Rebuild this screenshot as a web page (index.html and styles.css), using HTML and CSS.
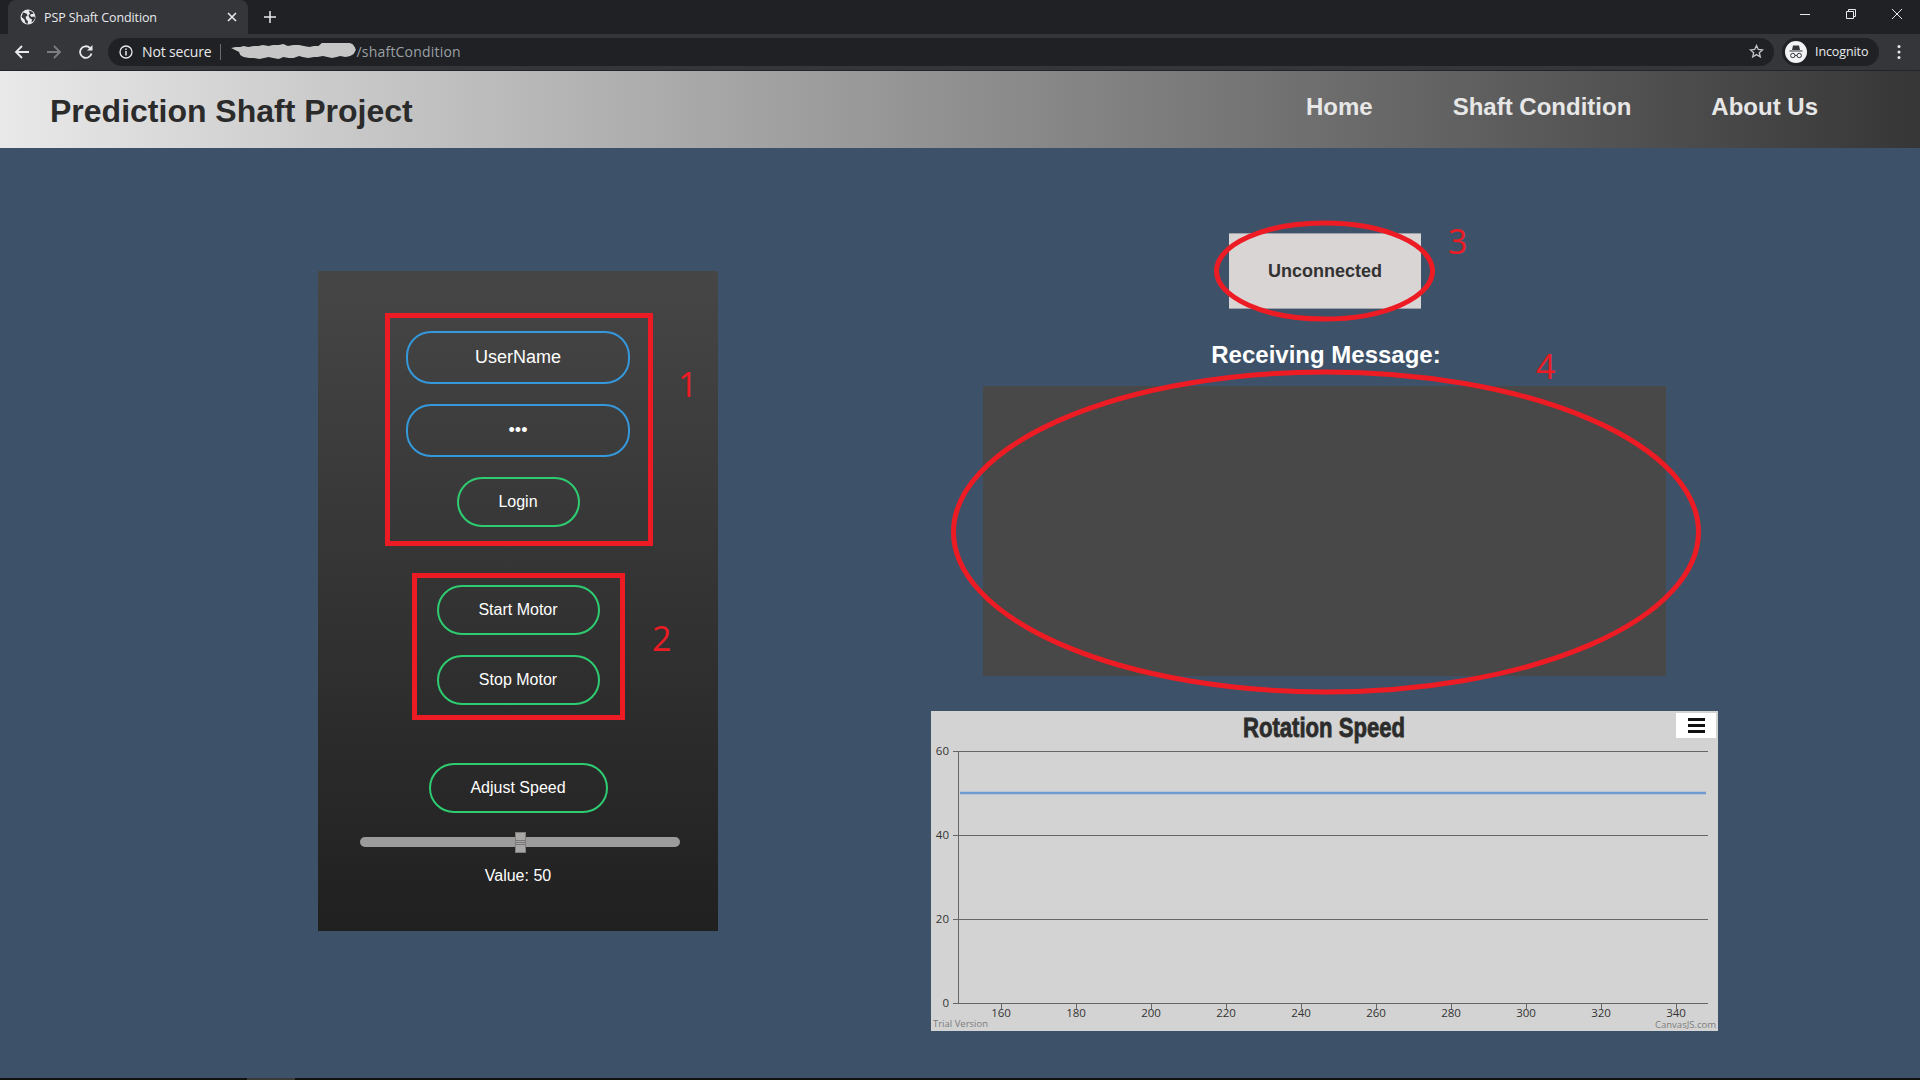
FILE: index.html
```html
<!DOCTYPE html>
<html lang="en">
<head>
<meta charset="utf-8">
<title>PSP Shaft Condition</title>
<link rel="stylesheet" href="styles.css">
</head>
<body>
<div class="tabstrip">
  <div class="tab">
    <svg class="favicon" width="16" height="16" viewBox="0 0 16 16"><circle cx="8" cy="8" r="7.500" fill="#e8eaed"/><path d="M3 3.500l3.500 1 1 2-2 1.500 1 3 1.500 1-.5 3-2-1-1-3.500-3-2.500zM9.500 1.500l3 1.500 1 2-2.500 0-1 1.500 1.500 1.500 3-.5.500 2-2 3-1.500 1 .5-3-2.500-1.500-1-2.500 1.500-2-1-2z" fill="#35363a"/></svg>
    <span class="tab-title">PSP Shaft Condition</span>
    <svg class="tab-close" width="10" height="10" viewBox="0 0 10 10"><path d="M1 1l8 8M9 1l-8 8" stroke="#e8eaed" stroke-width="1.600"/></svg>
  </div>
  <svg class="newtab" width="12" height="12" viewBox="0 0 12 12"><path d="M6 0v12M0 6h12" stroke="#e8eaed" stroke-width="1.500"/></svg>
  <div class="winctl">
    <svg width="12" height="12" viewBox="0 0 12 12"><path d="M1 6.500h10" stroke="#e8eaed"/></svg>
    <svg width="12" height="12" viewBox="0 0 12 12"><path d="M1.500 3.500h7v7h-7zM3.500 3.500v-2h7v7h-2" fill="none" stroke="#e8eaed"/></svg>
    <svg width="12" height="12" viewBox="0 0 12 12"><path d="M1 1l10 10M11 1l-10 10" stroke="#e8eaed"/></svg>
  </div>
</div>
<div class="toolbar">
  <svg class="navicon" width="16" height="16" viewBox="0 0 16 16"><path d="M15 8H2M8 2L2 8l6 6" fill="none" stroke="#e8eaed" stroke-width="1.800"/></svg>
  <svg class="navicon" width="16" height="16" viewBox="0 0 16 16"><path d="M1 8h13M8 2l6 6-6 6" fill="none" stroke="#7c7e82" stroke-width="1.800"/></svg>
  <svg class="navicon" width="16" height="16" viewBox="0 0 16 16"><path d="M13.500 9.500A5.800 5.800 0 1 1 12 4" fill="none" stroke="#e8eaed" stroke-width="1.800"/><path d="M14.500 1v5.500H9z" fill="#e8eaed"/></svg>
  <div class="omnibox">
    <svg width="14" height="14" viewBox="0 0 14 14"><circle cx="7" cy="7" r="6" fill="none" stroke="#e8eaed" stroke-width="1.300"/><path d="M7 6v4.500M7 3.500v1.500" stroke="#e8eaed" stroke-width="1.500"/></svg>
    <span class="secure">Not secure</span>
    <span class="omni-sep"></span>
    <svg class="blob" width="127" height="18" viewBox="0 0 112 18" preserveAspectRatio="none"><path d="M1 5l4-1 4 0 3-1 4 1 5-1 4 0 4-1 5 1 4-1 5 0 4-1 4 2 5-1 5 0 4 1 5 1 4-1 4 0 3-3 6-1 5 0 5-1 6 1 5 2 2 3 1 3-2 4-3 2-4 1-5-1-3 1-4 1-4-1-4-1-5 1-3 0-5 1-5-1-3-1-5 2-4 0-5-1-4 2-5-1-4-1-4 1-4 1-5-1-4 0-5-1-3-2-1-3z" fill="#c6c6c6"/></svg>
    <span class="url">/shaftCondition</span>
    <svg class="star" width="15" height="15" viewBox="0 0 15 15"><path d="M7.500 1.500l1.800 4 4.200.4-3.200 2.800 1 4.200-3.800-2.300-3.800 2.300 1-4.200L1.500 5.900l4.200-.4z" fill="none" stroke="#c4c6c9" stroke-width="1.300"/></svg>
  </div>
  <div class="incognito">
    <svg width="22" height="22" viewBox="0 0 22 22"><circle cx="11" cy="11" r="11" fill="#f1f3f4"/><path d="M7 9l1-4.500h6L15 9zM4.500 9.500h13v1h-13z" fill="#35363a"/><circle cx="7.800" cy="14.500" r="2.200" fill="none" stroke="#35363a"/><circle cx="14.200" cy="14.500" r="2.200" fill="none" stroke="#35363a"/><path d="M10 14.500h2" stroke="#35363a"/></svg>
    <span>Incognito</span>
  </div>
  <svg class="kebab" width="4" height="16" viewBox="0 0 4 16"><circle cx="2" cy="2.500" r="1.500" fill="#e8eaed"/><circle cx="2" cy="8" r="1.500" fill="#e8eaed"/><circle cx="2" cy="13.500" r="1.500" fill="#e8eaed"/></svg>
</div>
<header class="site-header">
  <h1 class="brand">Prediction Shaft Project</h1>
  <nav class="site-nav">
    <a>Home</a>
    <a>Shaft Condition</a>
    <a>About Us</a>
  </nav>
</header>
<main class="page">
  <section class="panel">
    <div class="mark-box login-box">
      <div class="pill field">UserName</div>
      <div class="pill field">•••</div>
      <div class="pill action login">Login</div>
    </div>
    <div class="mark-box motor-box">
      <div class="pill action motor">Start Motor</div>
      <div class="pill action motor">Stop Motor</div>
    </div>
    <div class="pill action adjust">Adjust Speed</div>
    <div class="slider"><span class="thumb"></span></div>
    <div class="value">Value: 50</div>
  </section>
  <section class="status">
    <div class="conn">Unconnected</div>
    <h2 class="recv">Receiving Message:</h2>
    <div class="msgbox"></div>
    <div class="chart">
      <svg class="chart-svg" width="787" height="320" viewBox="0 0 787 320">
        <text class="c-title" x="312" y="26" textLength="162" lengthAdjust="spacingAndGlyphs">Rotation Speed</text>
        <g class="c-grid">
          <path d="M22 40.500H777M22 124.500H777M22 208.500H777M22 292.500H777M27.500 40V293"/>
          <path d="M70.500 292V298M145.500 292V298M220.500 292V298M295.500 292V298M370.500 292V298M445.500 292V298M520.500 292V298M595.500 292V298M670.500 292V298M745.500 292V298"/>
        </g>
        <path class="c-line" d="M29 82H775"/>
        <g class="c-ylab">
          <text x="18" y="44">60</text><text x="18" y="128">40</text><text x="18" y="212">20</text><text x="18" y="296">0</text>
        </g>
        <g class="c-xlab">
          <text x="70" y="306">160</text><text x="145" y="306">180</text><text x="220" y="306">200</text><text x="295" y="306">220</text><text x="370" y="306">240</text><text x="445" y="306">260</text><text x="520" y="306">280</text><text x="595" y="306">300</text><text x="670" y="306">320</text><text x="745" y="306">340</text>
        </g>
        <text class="c-credit" x="2" y="316">Trial Version</text>
        <text class="c-credit c-right" x="785" y="317">CanvasJS.com</text>
      </svg>
      <div class="chart-menu"><span></span><span></span><span></span></div>
    </div>
  </section>
  <svg class="ink" width="1920" height="930" viewBox="0 0 1920 930">
    <ellipse cx="1324.500" cy="123" rx="108" ry="48"/>
    <ellipse cx="1326" cy="384" rx="372.500" ry="160"/>
  </svg>
  <span class="num num1">1</span>
  <span class="num num2">2</span>
  <span class="num num3">3</span>
  <span class="num num4">4</span>
</main>
<div class="taskbar"><span class="task-item"></span></div>
</body>
</html>
```
FILE: styles.css
```css
* { box-sizing: border-box; }
html, body { margin: 0; height: 1080px; overflow: hidden; }
body { display: flex; flex-direction: column; font-family: "Liberation Sans", Arial, sans-serif; background: #3d5269; }

.tabstrip { height: 34px; flex: none; display: flex; align-items: flex-end; padding-left: 8px; background: #202124; font-family: "Open Sans", sans-serif; position: relative; }
.tab { width: 240px; height: 34px; padding: 0 12px; display: flex; align-items: center; background: #35363a; border-radius: 8px 8px 0 0; color: #e8eaed; }
.favicon { flex: none; }
.tab-title { margin-left: 8px; font-size: 12.500px; letter-spacing: -.12px; white-space: nowrap; }
.tab-close { margin-left: auto; margin-right: -1px; }
.newtab { align-self: center; margin-left: 16px; }
.winctl { margin-left: auto; align-self: flex-start; display: flex; gap: 34px; padding: 8px 17px 0 0; }

.toolbar { height: 37px; flex: none; display: flex; align-items: center; background: #35363a; border-bottom: 1px solid #232427; padding: 0 0 1px 14px; color: #e8eaed; font-family: "Open Sans", sans-serif; }
.navicon { flex: none; margin-right: 16px; }
.omnibox { width: 1666px; margin-left: -2px; height: 28px; border-radius: 14px; background: #202124; display: flex; align-items: center; padding: 0 10px 0 11px; font-size: 14px; }
.secure { margin-left: 9px; letter-spacing: -.15px; white-space: nowrap; }
.omni-sep { width: 1px; height: 16px; background: #6a6b6e; margin: 0 9px 0 8px; }
.blob { flex: none; }
.url { color: #9aa0a6; letter-spacing: .2px; }
.star { margin-left: auto; }
.incognito { width: 97px; height: 28px; margin-left: 8px; border-radius: 14px; background: #202124; display: flex; align-items: center; gap: 8px; padding-left: 3px; font-size: 12.500px; white-space: nowrap; letter-spacing: -.1px; }
.kebab { margin-left: 18px; }

.site-header { height: 77px; flex: none; display: flex; justify-content: space-between; background: linear-gradient(90deg, #e9e9e9 0%, #363636 100%); padding: 0 102px 0 50px; }
.brand { margin: 3px 0 0; align-self: center; font-size: 32px; font-weight: 700; line-height: 38px; color: #2b2b2b; }
.site-nav { display: flex; gap: 80px; align-self: center; margin-top: -6px; }
.site-nav a { font-size: 24px; font-weight: 700; line-height: 28px; color: #e7e7e7; }

.page { flex: 1; min-height: 0; display: flex; position: relative; padding-left: 318px; }
.panel { width: 400px; height: 660px; margin-top: 123px; padding-top: 42px; display: flex; flex-direction: column; align-items: center; background: linear-gradient(180deg, #464646 0%, #202020 100%); color: #fff; }
.mark-box { border: 5px solid #ed1c24; display: flex; flex-direction: column; align-items: center; gap: 20px; }
.login-box { width: 268px; height: 233px; padding-top: 13px; margin-left: 2px; padding-right: 2px; }
.motor-box { width: 213px; height: 147px; margin-top: 27px; padding-top: 7px; margin-left: 1px; padding-right: 1px; }
.pill { display: flex; align-items: center; justify-content: center; border-radius: 25px; border-width: 2px; border-style: solid; }
.field { width: 224px; height: 53px; border-color: #3498db; font-size: 18px; }
.action { height: 50px; border-color: #2ecc71; font-size: 16px; }
.login { width: 123px; }
.motor { width: 163px; }
.adjust { width: 179px; margin-top: 43px; }
.slider { width: 320px; height: 10px; margin-top: 24px; margin-left: 4px; border-radius: 5px; background: #9c9c9c; position: relative; }
.thumb { position: absolute; left: 155px; top: -5px; width: 11px; height: 21px; background: linear-gradient(180deg, #a9a7a5 0 7px, #77767a 7px 8px, #a9a7a5 8px 9px, #77767a 9px 10px, #a9a7a5 10px 11px, #77767a 11px 12px, #a9a7a5 12px); border: 1px solid #807e7c; }
.value { margin-top: 20px; font-size: 16px; line-height: 18px; }

.status { width: 787px; margin-left: 213px; display: flex; flex-direction: column; align-items: center; }
.conn { width: 192px; height: 76px; margin-top: 85px; margin-left: 1px; display: flex; align-items: center; justify-content: center; background: #d9d5d5; border-top: 1px solid #a0a0a8; border-bottom: 1px solid #a0a0a8; color: #333; font-size: 18px; font-weight: 700; }
.recv { margin: 32px 0 0 3px; font-size: 24px; line-height: 28px; font-weight: 700; color: #fff; }
.msgbox { width: 683px; height: 290px; margin-top: 17px; background: #484848; }
.chart { width: 787px; height: 320px; margin-top: 35px; background: #d3d3d3; position: relative; }
.chart-svg { display: block; }
.c-title { font-family: "Liberation Sans Narrow", "Liberation Sans", sans-serif; font-size: 27px; font-weight: 700; fill: #2c2c2c; stroke: #2c2c2c; stroke-width: .8px; }
.c-grid path { fill: none; stroke: #666; stroke-width: 1; }
.c-line { fill: none; stroke: #6d9bd1; stroke-width: 2.400; }
.c-ylab text { font-family: "Open Sans", sans-serif; font-size: 11.500px; fill: #333; text-anchor: end; }
.c-xlab text { font-family: "Open Sans", sans-serif; font-size: 11.500px; fill: #333; text-anchor: middle; }
.c-credit { font-family: "Open Sans", sans-serif; font-size: 9.500px; fill: #7c7c7c; }
.c-right { text-anchor: end; }
.chart-menu { position: absolute; right: 2px; top: 2px; width: 40px; height: 25px; background: #fff; display: flex; flex-direction: column; align-items: center; justify-content: center; gap: 3px; }
.chart-menu span { width: 17px; height: 3px; background: #111; }

.ink { position: absolute; left: 0; top: 0; pointer-events: none; }
.ink ellipse { fill: none; stroke: #ed1c24; stroke-width: 5; }
.num { position: absolute; font-family: "Open Sans", sans-serif; font-size: 34px; line-height: 46px; color: #ed1c24; }
.num1 { left: 678px; top: 213px; }
.num2 { left: 652px; top: 467px; }
.num3 { left: 1448px; top: 70px; }
.num4 { left: 1536px; top: 195px; }

.taskbar { height: 2px; flex: none; background: #111; padding-left: 247px; }
.task-item { display: block; width: 48px; height: 2px; background: #3a3a3a; }
```
